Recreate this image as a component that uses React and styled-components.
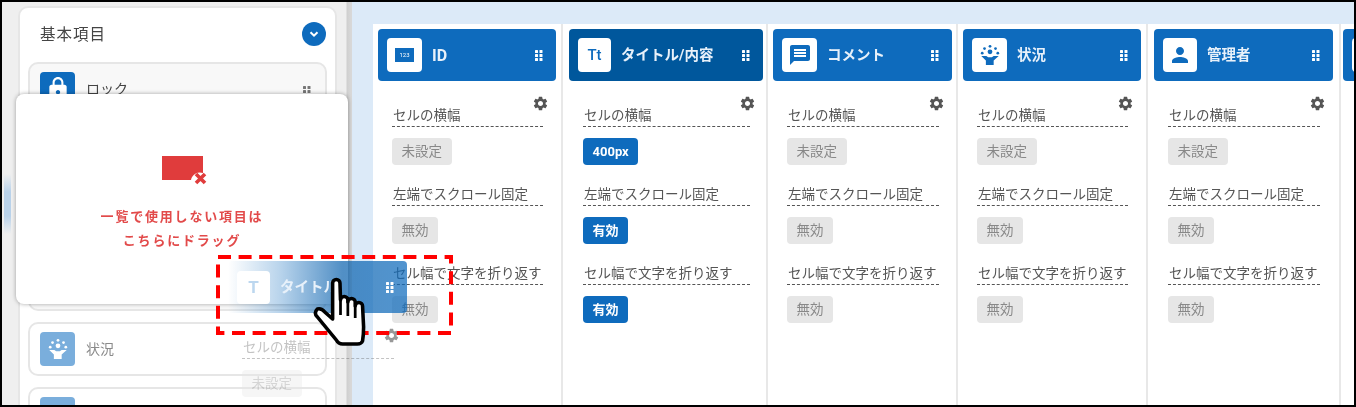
import React from 'react';
import styled, { createGlobalStyle } from 'styled-components';
import { MdLock, MdMessage, MdPerson, MdSettings } from 'react-icons/md';

const BLUE = '#0e6bbd';
const FONT = 'Roboto, "Noto Sans CJK JP", sans-serif';

const GlobalStyle = createGlobalStyle`
  html, body {
    margin: 0;
    padding: 0;
    background: #fff;
    font-family: ${FONT};
  }
`;

const Grip = ({ rows = 3, color = '#fff' }) => (
  <GripSvg width="9" height={rows * 4 + 1} viewBox={`0 0 9 ${rows * 4 + 1}`} fill={color}>
    {Array.from({ length: rows }).map((_, i) => (
      <g key={i}>
        <rect x="1" y={i * 4 + 1} width="3" height="3" rx="0.6" />
        <rect x="5.5" y={i * 4 + 1} width="3" height="3" rx="0.6" />
      </g>
    ))}
  </GripSvg>
);

const StatusIcon = ({ size = 22 }) => (
  <svg width={size} height={size} viewBox="0 0 24 24" fill="currentColor">
    <circle cx="3.5" cy="10" r="1.5" />
    <circle cx="6" cy="5" r="1.5" />
    <circle cx="12" cy="2.5" r="1.5" />
    <circle cx="18" cy="5" r="1.5" />
    <circle cx="20.5" cy="10" r="1.5" />
    <circle cx="12" cy="8.5" r="2.6" />
    <path d="M2.5 13h5.5l2 1.5h4l2-1.5h5.5l-5.5 5v5h-8.5v-5z" />
  </svg>
);

const NumberIcon = () => <NumberBox>123</NumberBox>;

const TrashIcon = () => (
  <TrashSvg width="46" height="31" viewBox="0 0 46 31">
    <path d="M0 0h41v17a9 9 0 0 0-12 7H0z" fill="#e03c3c" />
    <path d="M34 18l9 9M43 18l-9 9" stroke="#e03c3c" strokeWidth="3.6" fill="none" />
  </TrashSvg>
);

const Hand = () => (
  <HandSvg width="63" height="75" viewBox="0 0 60 75" preserveAspectRatio="none">
    <path
      d="M22.5 8a3.5 3.5 0 0 1 7 0L30 25a3.5 3.5 0 0 1 7 0v2a3.5 3.5 0 0 1 7 0v4a3.5 3.5 0 0 1 7 0L52 52Q52 60 51 66Q50 69 46 69L32 69Q28 69 26 65L8 42Q4 38 8 34Q12 33 15 37L22.5 44z"
      fill="#fff"
      stroke="#000"
      strokeWidth="3.4"
      strokeLinejoin="round"
    />
    <path d="M30 25v15M37 27v14M44 31v12" stroke="#000" strokeWidth="2.6" fill="none" />
  </HandSvg>
);

const DashedFrame = () => (
  <DashedSvg width="237" height="80" viewBox="0 0 237 80" fill="none">
    <rect x="2" y="2" width="233" height="76" stroke="#f00" strokeWidth="4" strokeDasharray="13 7.6" />
  </DashedSvg>
);

const SECTIONS = ['セルの横幅', '左端でスクロール固定', 'セル幅で文字を折り返す'];
const OFF = ['未設定', '無効', '無効'];

const Column = ({ col }) => (
  <ColumnWrap $width={col.width} $left={col.left} $right={col.right}>
    <Header $active={col.active}>
      <HeaderIcon $width={col.box}>{col.icon}</HeaderIcon>
      <HeaderTitle $latin={col.title === 'ID'}>{col.title}</HeaderTitle>
      <Grip />
    </Header>
    <ColumnBody>
      <GearRow>
        <MdSettings size={17} />
      </GearRow>
      {SECTIONS.map((label, i) => (
        <Section key={label}>
          <SectionLabel>{label}</SectionLabel>
          <Badge $on={!!col.values}>{col.values ? col.values[i] : OFF[i]}</Badge>
        </Section>
      ))}
    </ColumnBody>
  </ColumnWrap>
);

export default function App() {
  const columns = [
    { title: 'ID', icon: <NumberIcon />, width: 190, left: 5, right: 5, box: 35 },
    {
      title: 'タイトル/内容',
      icon: <TextIcon>Tt</TextIcon>,
      width: 205,
      left: 6,
      right: 3,
      box: 33,
      active: true,
      values: ['400px', '有効', '有効'],
    },
    { title: 'コメント', icon: <MdMessage size={24} />, width: 190, left: 5, right: 4, box: 35 },
    { title: '状況', icon: <StatusIcon />, width: 190, left: 5, right: 5, box: 35 },
    { title: '管理者', icon: <MdPerson size={24} />, width: 193, left: 6, right: 6, box: 34 },
  ];

  // only the first and the 状況 row show a label, the others sit under the drop card or the page edge
  const items = [
    { id: 'lock', label: 'ロック', icon: <MdLock size={26} /> },
    { id: 'id', icon: <NumberIcon /> },
    { id: 'comment', icon: <MdMessage size={22} /> },
    { id: 'title', icon: <TextIcon>Tt</TextIcon> },
    { id: 'status', label: '状況', icon: <StatusIcon />, faded: true },
    { id: 'manager', icon: <MdPerson size={22} />, faded: true },
  ];

  return (
    <Frame>
      <GlobalStyle />
      <Screen>
        <SidePanel>
          <ItemCard>
            <CardTitleRow>
              <CardTitle>基本項目</CardTitle>
              <ChevronCircle>
                <svg width="12" height="12" viewBox="0 0 12 12" fill="none">
                  <path d="M2.5 4.2L6 7.7l3.5-3.5" stroke="#fff" strokeWidth="2" />
                </svg>
              </ChevronCircle>
            </CardTitleRow>
            <ItemList>
              {items.map(item => (
                <Item key={item.id} $faded={item.faded}>
                  <ItemIcon $faded={item.faded}>{item.icon}</ItemIcon>
                  <ItemLabel $faded={item.faded}>{item.label}</ItemLabel>
                  {!item.faded && <Grip rows={2} color="#777" />}
                </Item>
              ))}
            </ItemList>
          </ItemCard>
        </SidePanel>
        <Main>
          <Board>
            {columns.map(col => (
              <Column key={col.title} col={col} />
            ))}
            <LastColumn>
              <Header>
                <HeaderIcon $width={35} />
              </Header>
            </LastColumn>
          </Board>
        </Main>

        <DropCard>
          <TrashIcon />
          <DropText>
            一覧で使用しない項目は
            <br />
            こちらにドラッグ
          </DropText>
        </DropCard>

        <Ghost>
          <GhostHeader>
            <GhostIcon>T</GhostIcon>
            <HeaderTitle>タイトル</HeaderTitle>
            <Grip />
          </GhostHeader>
          <ColumnBody>
            <GhostGear>
              <MdSettings size={17} />
            </GhostGear>
            <GhostSection>
              <SectionLabel>セルの横幅</SectionLabel>
              <Badge>未設定</Badge>
            </GhostSection>
          </ColumnBody>
        </Ghost>

        <DashedFrame />
        <Hand />
      </Screen>
    </Frame>
  );
}

const Frame = styled.div`
  width: 1356px;
  height: 407px;
  box-sizing: border-box;
  border: 2px solid #000;
  overflow: hidden;
  background: #fff;
`;

const Screen = styled.div`
  position: relative;
  display: flex;
  width: 100%;
  height: 100%;
  overflow: hidden;
  filter: blur(0.5px);
`;

const SidePanel = styled.div`
  flex: 0 0 350px;
  box-sizing: border-box;
  padding: 4px 15px 0 16px;
  background:
    linear-gradient(180deg, transparent, #b9d2ea 30%, #b9d2ea 70%, transparent) 2px 172px / 7px 60px no-repeat,
    linear-gradient(90deg, #efefef 0, #efefef 344px, #cfcfcf 345px, #d8d8d8 349px);
`;

const ItemCard = styled.div`
  box-sizing: border-box;
  height: 420px;
  padding: 0 8px;
  background: #fff;
  border: 2px solid #e6e6e6;
  border-radius: 10px;
`;

const CardTitleRow = styled.div`
  display: flex;
  align-items: center;
  justify-content: space-between;
  box-sizing: border-box;
  height: 54px;
  padding: 0 1px 5px 10px;
`;

const CardTitle = styled.div`
  margin-left: 2px;
  font-size: 15.5px;
  letter-spacing: 1px;
  color: #444;
`;

const ChevronCircle = styled.div`
  display: flex;
  align-items: center;
  justify-content: center;
  width: 24px;
  height: 24px;
  margin-top: 3px;
  border-radius: 50%;
  background: ${BLUE};
`;

const ItemList = styled.div`
  display: flex;
  flex-direction: column;
  gap: 11px;
`;

const Item = styled.div`
  display: flex;
  align-items: center;
  flex: 0 0 54px;
  box-sizing: border-box;
  padding: 0 14px 0 8px;
  background: ${p => (p.$faded ? '#fff' : '#f8f8f8')};
  border: 2px solid #e6e6e6;
  border-radius: 10px;
`;

const ItemIcon = styled.div`
  display: flex;
  align-items: center;
  justify-content: center;
  width: 35px;
  height: 34px;
  margin: 0 11px 0 2px;
  color: #fff;
  background: ${p => (p.$faded ? '#7aaedc' : BLUE)};
  border-radius: 4px;
`;

const ItemLabel = styled.div`
  flex: 1;
  margin-top: -2px;
  font-size: 14px;
  color: ${p => (p.$faded ? '#8a8a8a' : '#444')};
`;

const GripSvg = styled.svg`
  flex: 0 0 auto;
`;

const Main = styled.div`
  flex: 1;
  min-width: 0;
  padding: 22px 0 0 21px;
  background: #dceaf8;
`;

const Board = styled.div`
  display: flex;
  height: 100%;
  overflow: hidden;
  background: #fff;
`;

const ColumnWrap = styled.div`
  flex: 0 0 ${p => p.$width}px;
  box-sizing: border-box;
  padding: 5px ${p => p.$right}px 0 ${p => p.$left}px;
  border-right: 2px solid #e8e8e8;
`;

const LastColumn = styled.div`
  flex: 1 0 auto;
  padding: 5px 0 0 2px;
`;

const Header = styled.div`
  display: flex;
  align-items: center;
  height: 52px;
  padding: 0 13px 0 9px;
  color: #fff;
  background: ${p => (p.$active ? '#00579c' : BLUE)};
  border-radius: 4px;
`;

const HeaderIcon = styled.div`
  display: flex;
  align-items: center;
  justify-content: center;
  flex: 0 0 ${p => p.$width}px;
  height: 34px;
  margin-right: 10px;
  color: ${BLUE};
  background: #fff;
  border-radius: 4px;
`;

const HeaderTitle = styled.div`
  flex: 1;
  margin-top: ${p => (p.$latin ? 0 : -3)}px;
  font-size: ${p => (p.$latin ? 16 : 14.5)}px;
  font-weight: 700;
  white-space: nowrap;
  color: #e8f1fa;
`;

const NumberBox = styled.div`
  width: 19px;
  height: 14px;
  font-size: 6px;
  line-height: 14px;
  text-align: center;
  color: #fff;
  background: ${BLUE};
`;

const TextIcon = styled.span`
  font-size: 15px;
  font-weight: 500;
  color: ${BLUE};
`;

const ColumnBody = styled.div`
  padding: 14px 13px 0 14px;
`;

const GearRow = styled.div`
  display: flex;
  justify-content: flex-end;
  height: 13px;
  margin-right: -6px;
  color: #555;
`;

const GhostGear = styled(GearRow)`
  opacity: 0.6;
`;

const Section = styled.div`
  margin-bottom: 22px;
`;

const GhostSection = styled(Section)`
  opacity: 0.35;
`;

const SectionLabel = styled.div`
  box-sizing: border-box;
  height: 19px;
  padding-left: 1px;
  font-size: 13.5px;
  line-height: 15px;
  white-space: nowrap;
  color: #555;
  border-bottom: 1px dashed #555;
`;

const Badge = styled.div`
  display: inline-block;
  height: 27px;
  margin-top: 11px;
  padding: 0 9.5px;
  font-size: ${p => (p.$on ? 13 : 13.5)}px;
  font-weight: ${p => (p.$on ? 700 : 400)};
  line-height: 27px;
  color: ${p => (p.$on ? '#fff' : '#888')};
  background: ${p => (p.$on ? BLUE : '#e6e6e6')};
  border-radius: 4px;
`;

const DropCard = styled.div`
  position: absolute;
  left: 14px;
  top: 92px;
  display: flex;
  flex-direction: column;
  align-items: center;
  box-sizing: border-box;
  width: 332px;
  height: 210px;
  padding-top: 62px;
  background: #fff;
  border-radius: 8px;
  box-shadow: 0 0 4px rgba(0, 0, 0, 0.35);
`;

const TrashSvg = styled.svg`
  margin-left: 5px;
`;

const DropText = styled.div`
  margin-top: 18px;
  font-size: 13px;
  font-weight: 700;
  line-height: 24px;
  letter-spacing: 1.8px;
  text-align: center;
  color: #e24a4a;
`;

const Ghost = styled.div`
  position: absolute;
  left: 226px;
  top: 259px;
  width: 179px;
`;

const GhostHeader = styled(Header)`
  background: linear-gradient(
    90deg,
    rgba(14, 107, 189, 0) 0,
    rgba(14, 107, 189, 0.3) 30%,
    rgba(14, 100, 175, 0.72) 64%,
    rgba(14, 107, 189, 0.72) 100%
  );
`;

const GhostIcon = styled.div`
  display: flex;
  align-items: center;
  justify-content: center;
  flex: 0 0 33px;
  height: 33px;
  margin-right: 10px;
  font-size: 17px;
  font-weight: 700;
  color: #bcd7ef;
  background: #fff;
  border-radius: 4px;
`;

const DashedSvg = styled.svg`
  position: absolute;
  left: 214px;
  top: 253px;
`;

const HandSvg = styled.svg`
  position: absolute;
  left: 307px;
  top: 273px;
`;
